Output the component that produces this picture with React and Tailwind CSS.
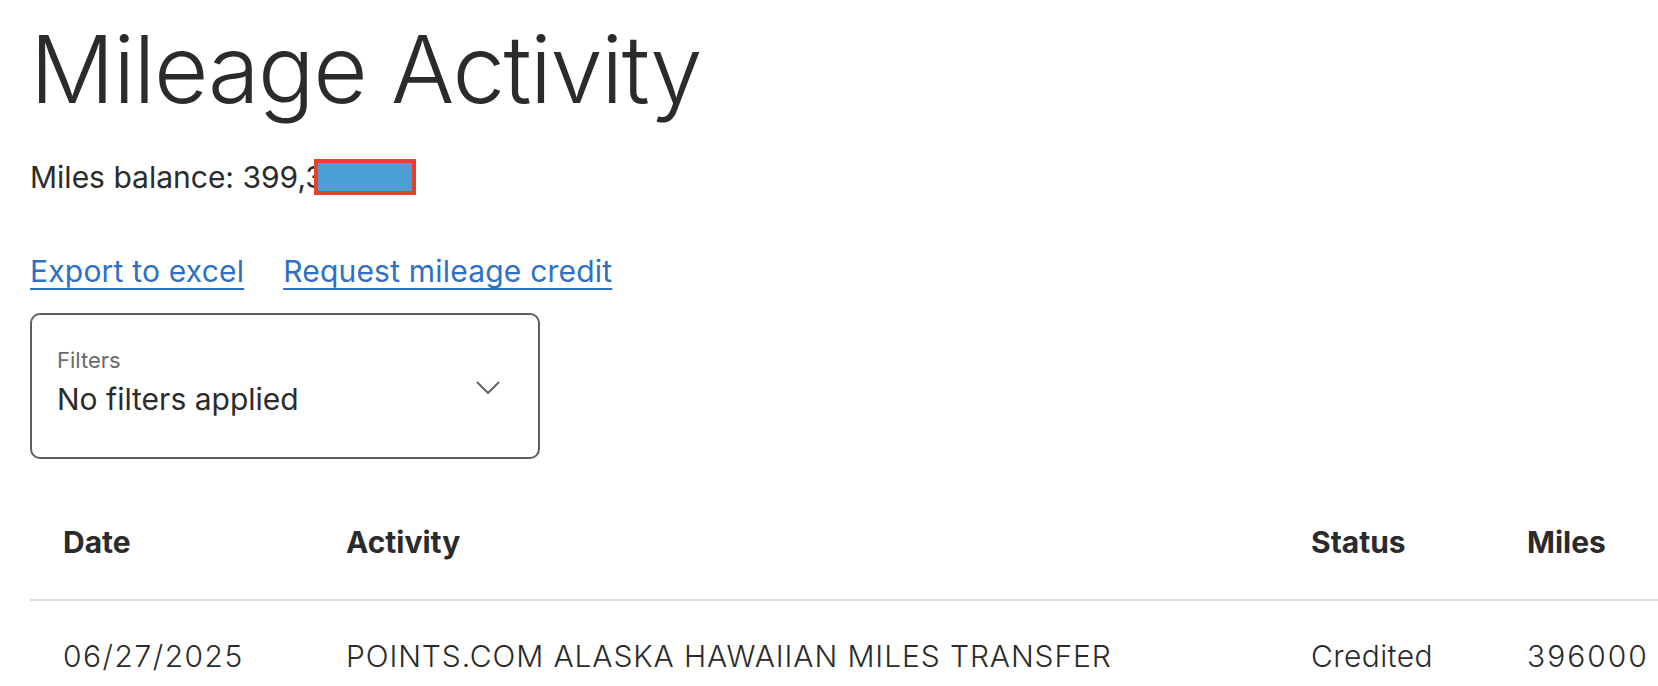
import React from "react";

const columns = [
  { key: "date", label: "Date", cell: "tracking-[1.5px]" },
  { key: "activity", label: "Activity", cell: "tracking-[0.9px]" },
  { key: "status", label: "Status", cell: "tracking-[0.4px]" },
  { key: "miles", label: "Miles", cell: "tracking-[2px]" },
];

const rows = [
  {
    date: "06/27/2025",
    activity: "POINTS.COM ALASKA HAWAIIAN MILES TRANSFER",
    status: "Credited",
    miles: "396000",
  },
];

const grid = "grid grid-cols-[283px_965px_216px_1fr]";

export default function App() {
  return (
    <div
      className="min-h-screen bg-white pl-[30px] pt-[22px] text-[#2b2b2b] overflow-hidden"
      style={{ fontFamily: "Inter, 'Noto Sans', sans-serif" }}
    >
      {/* Header */}
      <h1 className="text-[94px] leading-[94px] font-light tracking-[-1.5px]">
        Mileage Activity
      </h1>

      <div className="mt-[43px] text-[30px] leading-[36px] flex items-center">
        <span>Miles balance: 399,3</span>
        <span className="-ml-[10px] inline-block w-[102px] h-[36px] bg-[#4aa0d6] border-[4px] border-[#e8412b]" />
      </div>

      {/* Actions */}
      <div className="mt-[58px] flex gap-[39px] text-[30px] leading-[36px] tracking-[0.2px] text-[#2d70c6]">
        <a href="#" className="underline decoration-2 underline-offset-[6px]">
          Export to excel
        </a>
        <a href="#" className="underline decoration-2 underline-offset-[6px]">
          Request mileage credit
        </a>
      </div>

      {/* Filters */}
      <button className="mt-[24px] w-[510px] h-[146px] border-2 border-[#5c5f64] rounded-[10px] flex items-start justify-between pl-[25px] pr-[38px] pt-[32px] text-left">
        <div>
          <div className="text-[22px] leading-[26px] text-[#6b6b6b]">Filters</div>
          <div className="mt-[8px] text-[30px] leading-[36px]">No filters applied</div>
        </div>
        <svg className="mt-[34px]" width="24" height="14" viewBox="0 0 24 14" fill="none">
          <path d="M1.5 1.5 L12 12 L22.5 1.5" stroke="#5f6368" strokeWidth="2" strokeLinecap="round" strokeLinejoin="round" />
        </svg>
      </button>

      {/* Table */}
      <div className="mt-[66px]">
        <div className={`${grid} border-b-2 border-[#dcdcdc] pb-[40px]`}>
          {columns.map((c) => (
            <div key={c.key} className="pl-[33px] text-[30px] leading-[34px] font-bold">
              {c.label}
            </div>
          ))}
        </div>
        {rows.map((r) => (
          <div key={r.date} className={`${grid} pt-[38px]`}>
            {columns.map((c) => (
              <div
                key={c.key}
                className={`pl-[33px] text-[30px] leading-[34px] font-light whitespace-nowrap ${c.cell}`}
              >
                {r[c.key]}
              </div>
            ))}
          </div>
        ))}
      </div>
    </div>
  );
}
